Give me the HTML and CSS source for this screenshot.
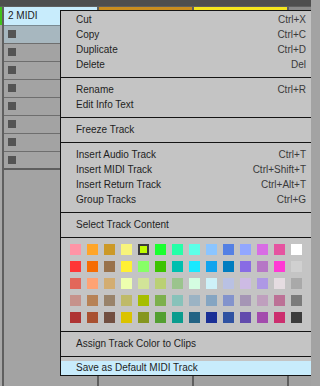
FILE: index.html
```html
<!DOCTYPE html>
<html>
<head>
<meta charset="utf-8">
<link rel="stylesheet" href="styles.css">
</head>
<body>
<div class="app">
  <div class="topbar"></div>
  <div class="tracks">
    <div class="edge"><div class="edge-head"></div></div>
    <div class="vdiv"></div>
    <div class="track">
      <div class="track-head">2 MIDI</div>
      <div class="slot sel"><span class="stop"></span></div>
      <div class="slot"><span class="stop"></span></div>
      <div class="slot"><span class="stop"></span></div>
      <div class="slot"><span class="stop"></span></div>
      <div class="slot"><span class="stop"></span></div>
      <div class="slot"><span class="stop"></span></div>
      <div class="slot"><span class="stop"></span></div>
      <div class="slot last"><span class="stop"></span></div>
    </div>
    <div class="vdiv"></div>
    <div class="col"><div class="strip orange"></div></div>
    <div class="vdiv"></div>
    <div class="col"><div class="strip yellow"></div></div>
    <div class="vdiv"></div>
    <div class="col grow"><div class="strip gray"></div></div>
  </div>

  <div class="menu">
    <div class="grp first">
      <div class="item"><span>Cut</span><span class="key">Ctrl+X</span></div>
      <div class="item"><span>Copy</span><span class="key">Ctrl+C</span></div>
      <div class="item"><span>Duplicate</span><span class="key">Ctrl+D</span></div>
      <div class="item"><span>Delete</span><span class="key">Del</span></div>
    </div>
    <div class="grp">
      <div class="item"><span>Rename</span><span class="key">Ctrl+R</span></div>
      <div class="item"><span>Edit Info Text</span></div>
    </div>
    <div class="grp">
      <div class="item"><span>Freeze Track</span></div>
    </div>
    <div class="grp">
      <div class="item"><span>Insert Audio Track</span><span class="key">Ctrl+T</span></div>
      <div class="item"><span>Insert MIDI Track</span><span class="key">Ctrl+Shift+T</span></div>
      <div class="item"><span>Insert Return Track</span><span class="key">Ctrl+Alt+T</span></div>
      <div class="item"><span>Group Tracks</span><span class="key">Ctrl+G</span></div>
    </div>
    <div class="grp">
      <div class="item"><span>Select Track Content</span></div>
    </div>
    <div class="grp swatches">
      <span class="sw" style="background:#ff94a6"></span>
      <span class="sw" style="background:#ffa529"></span>
      <span class="sw" style="background:#cc9927"></span>
      <span class="sw" style="background:#f7f47c"></span>
      <span class="sw current" style="background:#bffb00"></span>
      <span class="sw" style="background:#1aff2f"></span>
      <span class="sw" style="background:#25ffa8"></span>
      <span class="sw" style="background:#5cffe8"></span>
      <span class="sw" style="background:#8bc5ff"></span>
      <span class="sw" style="background:#5480e4"></span>
      <span class="sw" style="background:#92a7ff"></span>
      <span class="sw" style="background:#d86ce4"></span>
      <span class="sw" style="background:#e553a0"></span>
      <span class="sw" style="background:#ffffff"></span>

      <span class="sw" style="background:#ff3636"></span>
      <span class="sw" style="background:#f66c03"></span>
      <span class="sw" style="background:#99724b"></span>
      <span class="sw" style="background:#fff034"></span>
      <span class="sw" style="background:#87ff67"></span>
      <span class="sw" style="background:#3dc300"></span>
      <span class="sw" style="background:#00bfaf"></span>
      <span class="sw" style="background:#19e9ff"></span>
      <span class="sw" style="background:#10a4ee"></span>
      <span class="sw" style="background:#007dc0"></span>
      <span class="sw" style="background:#886ce4"></span>
      <span class="sw" style="background:#b677c6"></span>
      <span class="sw" style="background:#ff39d4"></span>
      <span class="sw" style="background:#d0d0d0"></span>

      <span class="sw" style="background:#e2675a"></span>
      <span class="sw" style="background:#ffa374"></span>
      <span class="sw" style="background:#d3ad71"></span>
      <span class="sw" style="background:#edffae"></span>
      <span class="sw" style="background:#d2e498"></span>
      <span class="sw" style="background:#bad074"></span>
      <span class="sw" style="background:#9bc48d"></span>
      <span class="sw" style="background:#d4fde1"></span>
      <span class="sw" style="background:#cdf1f8"></span>
      <span class="sw" style="background:#b9c1e3"></span>
      <span class="sw" style="background:#cdbbe4"></span>
      <span class="sw" style="background:#ae98e5"></span>
      <span class="sw" style="background:#e5dce1"></span>
      <span class="sw" style="background:#a9a9a9"></span>

      <span class="sw" style="background:#c6928b"></span>
      <span class="sw" style="background:#b78256"></span>
      <span class="sw" style="background:#99836a"></span>
      <span class="sw" style="background:#bfba69"></span>
      <span class="sw" style="background:#a6be00"></span>
      <span class="sw" style="background:#7db04d"></span>
      <span class="sw" style="background:#88c2ba"></span>
      <span class="sw" style="background:#9bb3c4"></span>
      <span class="sw" style="background:#85a5c2"></span>
      <span class="sw" style="background:#8393cc"></span>
      <span class="sw" style="background:#a595b5"></span>
      <span class="sw" style="background:#bf9fbe"></span>
      <span class="sw" style="background:#bc7196"></span>
      <span class="sw" style="background:#7b7b7b"></span>

      <span class="sw" style="background:#af3333"></span>
      <span class="sw" style="background:#a95131"></span>
      <span class="sw" style="background:#724f41"></span>
      <span class="sw" style="background:#dbc300"></span>
      <span class="sw" style="background:#85961f"></span>
      <span class="sw" style="background:#539f31"></span>
      <span class="sw" style="background:#0a9c8e"></span>
      <span class="sw" style="background:#236384"></span>
      <span class="sw" style="background:#1a2f96"></span>
      <span class="sw" style="background:#2f52a2"></span>
      <span class="sw" style="background:#624bad"></span>
      <span class="sw" style="background:#a34bad"></span>
      <span class="sw" style="background:#cc2e6e"></span>
      <span class="sw" style="background:#3c3c3c"></span>
    </div>
    <div class="grp">
      <div class="item"><span>Assign Track Color to Clips</span></div>
    </div>
    <div class="grp last">
      <div class="item hl"><span>Save as Default MIDI Track</span></div>
    </div>
  </div>
</div>
</body>
</html>
```

FILE: styles.css
```css
html, body {
  margin: 0;
  padding: 0;
  overflow: hidden;
}

body {
  background: #a3a3a3;
  font-family: "Liberation Sans", Arial, sans-serif;
}

.app {
  position: relative;
  width: 311px;
  height: 386px;
  overflow: hidden;
}

.topbar {
  height: 6px;
  background: #4e4e4e;
  border-bottom: 1px solid #5f5f5f;
}

.tracks {
  display: flex;
  height: 379px;
}

.edge {
  width: 2px;
  background: #a7a7a7;
}

.edge-head {
  height: 18px;
  background: #40c21c;
}

.vdiv {
  width: 2px;
  background: #5f5f5f;
}

.track {
  width: 93px;
  background: #a3a3a3;
}

.track-head {
  height: 18px;
  line-height: 18px;
  border-bottom: 1px solid #7a8a92;
  background: #c8ecfc;
  padding-left: 4px;
  font-size: 10px;
  color: #1b1b1b;
}

.slot {
  height: 13px;
  padding: 4px 0 0 4px;
  border-bottom: 1px solid #6e6e6e;
}

.slot.sel {
  background: #a7b7bf;
}

.slot.last {
  height: 12px;
  border-bottom: 2px solid #5e5e5e;
}

.stop {
  display: block;
  width: 8px;
  height: 8px;
  background: #545454;
}

.col {
  width: 93px;
  background: #a1a1a1;
}

.col.grow {
  flex: 1;
}

.strip {
  height: 3px;
}

.orange { background: #c98d1f; }
.yellow { background: #f5e61e; }
.gray   { background: #8a8a8a; }

/* context menu overlay */
.menu {
  position: absolute;
  left: 60px;
  top: 10px;
  width: 259px;
  box-sizing: border-box;
  background: #c4c4c4;
  border: 1px solid #141414;
  color: #1e1e1e;
  font-size: 10px;
}

.grp {
  padding: 4px 0 5px;
  border-top: 1px solid #141414;
}

.grp.first {
  padding-top: 1px;
  border-top: none;
}

.grp.last {
  padding-bottom: 0;
}

.item {
  display: flex;
  justify-content: space-between;
  height: 15px;
  line-height: 15px;
  padding: 0 12px 0 15px;
  white-space: nowrap;
}

.item.hl {
  height: 14px;
  line-height: 14px;
  background: #c8ecfc;
}

.key {
  color: #3a3a3a;
}

.swatches {
  display: grid;
  grid-template-columns: repeat(14, 11px);
  grid-auto-rows: 11px;
  gap: 6px;
  padding: 6px 0 8px 9px;
}

.sw {
  display: block;
  width: 11px;
  height: 11px;
  box-sizing: border-box;
}

.sw.current {
  border: 2px solid #3b3b3b;
}
```
